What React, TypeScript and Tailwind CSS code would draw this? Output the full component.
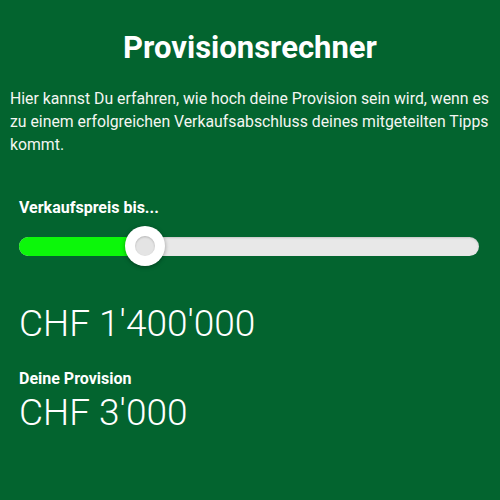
import React from 'react';

const price = 1400000;
const min = 0;
const max = 5100000;

function formatChf(n: number) {
  return 'CHF ' + n.toString().replace(/\B(?=(\d{3})+(?!\d))/g, "'");
}

export default function App() {
  const trackWidth = 460;
  const pos = ((price - min) / (max - min)) * trackWidth;

  return (
    <div
      className="w-[500px] h-[500px] bg-[#03642f] text-white overflow-hidden"
      style={{ fontFamily: 'Roboto, "Liberation Sans", sans-serif' }}
    >
      <h1 className="mt-[30px] text-center text-[31px] leading-[36px] font-bold">Provisionsrechner</h1>
      <p className="mt-[21px] pl-[10px] pr-[4px] text-[15.8px] leading-[23px] text-[#f4f6f2]">
        Hier kannst Du erfahren, wie hoch deine Provision sein wird, wenn es zu einem erfolgreichen
        Verkaufsabschluss deines mitgeteilten Tipps kommt.
      </p>

      <div className="px-[19px]">
        <div className="mt-[42px] text-[16px] leading-[20px] font-bold">Verkaufspreis bis...</div>

        <div className="relative mt-[8px] h-[40px] w-[460px] flex items-center">
          <div className="h-[19px] w-full rounded-full bg-[#e8e8e8] shadow-[inset_0_1px_2px_rgba(0,0,0,0.15)] overflow-hidden">
            <div className="h-full bg-[#0cf70a]" style={{ width: pos + 10 }} />
          </div>
          <div
            className="absolute top-0 h-[40px] w-[40px] rounded-full bg-white shadow-[0_1px_4px_rgba(0,0,0,0.35)] flex items-center justify-center"
            style={{ left: pos - 20 }}
          >
            <div className="h-[20px] w-[20px] rounded-full bg-[#e4e4e4] shadow-[inset_0_1px_2px_rgba(0,0,0,0.2)]" />
          </div>
        </div>

        <div className="mt-[37px] text-[37px] leading-[42px] font-light">{formatChf(price)}</div>
        <div className="mt-[24px] text-[16px] leading-[20px] font-bold">Deine Provision</div>
        <div className="mt-[3px] text-[37px] leading-[42px] font-light">{formatChf(3000)}</div>
      </div>
    </div>
  );
}
